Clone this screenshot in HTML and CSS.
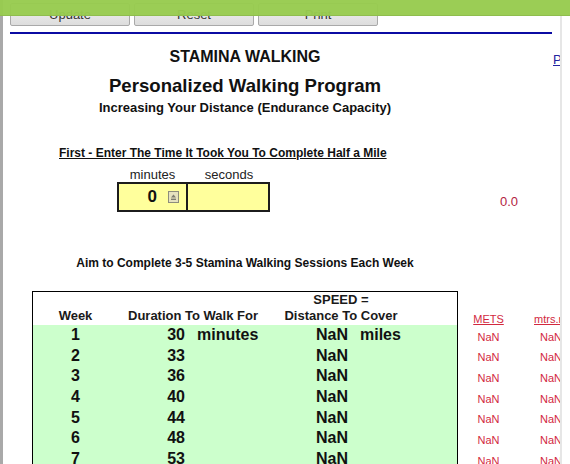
FILE: index.html
```html
<!DOCTYPE html>
<html lang="en">
<head>
    <meta charset="UTF-8">
    <title>Stamina Walking</title>
    <link rel="stylesheet" href="styles.css">
</head>
<body>
    <div class="frame">
        <div class="toolbar">
            <button class="btn">Update</button>
            <button class="btn">Reset</button>
            <button class="btn">Print</button>
        </div>
        <div class="rule"></div>

        <div class="head">
            <div class="titles">
                <h1 class="kicker">STAMINA WALKING</h1>
                <h2 class="title">Personalized Walking Program</h2>
                <p class="subtitle">Increasing Your Distance (Endurance Capacity)</p>
            </div>
            <a class="side-link" href="#">P</a>
        </div>

        <div class="entry-row">
            <div class="entry">
                <p class="entry-prompt">First - Enter The Time It Took You To Complete Half a Mile</p>
                <div class="time-grid">
                    <span class="time-label">minutes</span>
                    <span class="time-label">seconds</span>
                    <div class="time-box minutes">
                        <span class="time-value">0</span>
                        <svg class="spin-icon" width="11" height="12" viewBox="0 0 11 12">
                            <rect x="0.5" y="0.5" width="10" height="11" fill="#e6e2bf" stroke="#8d8d7c"/>
                            <path d="M3 6.5 L5.5 3.5 L8 6.5 Z" fill="#7d7d70"/>
                            <rect x="3" y="7.6" width="5" height="1.4" fill="#7d7d70"/>
                        </svg>
                    </div>
                    <div class="time-box seconds"></div>
                </div>
            </div>
            <span class="pace">0.0</span>
        </div>

        <p class="aim">Aim to Complete 3-5 Stamina Walking Sessions Each Week</p>

        <div class="plan">
            <div class="plan-table">
                <div class="plan-head">
                    <span class="h-speed">SPEED =</span>
                    <span class="h-week">Week</span>
                    <span class="h-duration">Duration To Walk For</span>
                    <span class="h-distance">Distance To Cover</span>
                </div>
                <div class="plan-body">
                    <div class="plan-row"><span class="c-week">1</span><span class="c-num">30</span><span class="c-unit">minutes</span><span class="c-num">NaN</span><span class="c-unit">miles</span></div>
                    <div class="plan-row"><span class="c-week">2</span><span class="c-num">33</span><span class="c-unit"></span><span class="c-num">NaN</span><span class="c-unit"></span></div>
                    <div class="plan-row"><span class="c-week">3</span><span class="c-num">36</span><span class="c-unit"></span><span class="c-num">NaN</span><span class="c-unit"></span></div>
                    <div class="plan-row"><span class="c-week">4</span><span class="c-num">40</span><span class="c-unit"></span><span class="c-num">NaN</span><span class="c-unit"></span></div>
                    <div class="plan-row"><span class="c-week">5</span><span class="c-num">44</span><span class="c-unit"></span><span class="c-num">NaN</span><span class="c-unit"></span></div>
                    <div class="plan-row"><span class="c-week">6</span><span class="c-num">48</span><span class="c-unit"></span><span class="c-num">NaN</span><span class="c-unit"></span></div>
                    <div class="plan-row"><span class="c-week">7</span><span class="c-num">53</span><span class="c-unit"></span><span class="c-num">NaN</span><span class="c-unit"></span></div>
                </div>
            </div>

            <div class="extra">
                <a class="x-head" href="#">METS</a>
                <a class="x-head x-second" href="#">mtrs.min</a>
                <span class="x-val">NaN</span><span class="x-val x-second">NaN</span>
                <span class="x-val">NaN</span><span class="x-val x-second">NaN</span>
                <span class="x-val">NaN</span><span class="x-val x-second">NaN</span>
                <span class="x-val">NaN</span><span class="x-val x-second">NaN</span>
                <span class="x-val">NaN</span><span class="x-val x-second">NaN</span>
                <span class="x-val">NaN</span><span class="x-val x-second">NaN</span>
                <span class="x-val">NaN</span><span class="x-val x-second">NaN</span>
            </div>
        </div>
    </div>

    <div class="topbar"></div>
</body>
</html>
```

FILE: styles.css
```css
body {
    margin: 0;
    font-family: 'Liberation Sans', Arial, sans-serif;
    color: #111;
    background: #fff;
}

.frame {
    width: 557px;
    height: 464px;
    border-left: 3px solid #a9a9a9;
    border-right: 2px solid #e6e6e6;
    overflow: hidden;
}

.topbar {
    position: absolute;
    top: 0;
    left: 0;
    width: 570px;
    height: 15px;
    background: rgba(152, 203, 80, 0.97);
    border-bottom: 1px solid #8fbd4e;
}

.toolbar {
    display: flex;
    gap: 4px;
    padding: 3px 0 0 7px;
}

.btn {
    width: 120px;
    height: 23px;
    padding: 0;
    font-family: 'Liberation Sans', Arial, sans-serif;
    font-size: 13px;
    color: #333;
    background: linear-gradient(#f2f2f2, #dddddd);
    border: 1px solid #a9a9a9;
    border-radius: 2px;
}

.rule {
    margin: 6px 0 0 7px;
    width: 542px;
    height: 2px;
    background: #0b0ba3;
}

.head {
    display: flex;
}

.titles {
    flex: none;
    width: 470px;
    margin-left: 7px;
    padding-top: 13px;
    text-align: center;
}

.kicker {
    margin: 0;
    font-size: 16px;
    line-height: 20px;
}

.title {
    margin: 7px 0 0;
    font-size: 18.6px;
    line-height: 24px;
}

.subtitle {
    margin: 2px 0 0;
    font-size: 13px;
    font-weight: bold;
    line-height: 16px;
}

.side-link {
    margin: 18px 0 0 73px;
    font-size: 13px;
    line-height: 16px;
    color: #2323a0;
    height: 16px;
}

.entry-row {
    display: flex;
    margin-top: 30px;
}

.entry {
    flex: none;
    width: 470px;
    margin-left: 7px;
}

.entry-prompt {
    margin: 0 0 0 49px;
    font-size: 12px;
    font-weight: bold;
    line-height: 15px;
    text-decoration: underline;
}

.time-grid {
    display: grid;
    grid-template-columns: 71px 82px;
    margin: 6px 0 0 107px;
}

.time-label {
    font-size: 13px;
    line-height: 15px;
    text-align: center;
    color: #222;
}

.time-box {
    box-sizing: border-box;
    height: 30px;
    border: 2px solid #1c1c1c;
    background: #ffff9c;
}

.time-box.minutes {
    display: flex;
    align-items: center;
    justify-content: flex-end;
    gap: 11px;
    padding-right: 7px;
}

.time-box.seconds {
    border-left: 0;
}

.time-value {
    font-size: 17px;
    font-weight: bold;
}

.spin-icon {
    display: block;
}

.pace {
    margin: 48px 0 0 20px;
    font-size: 13px;
    line-height: 16px;
    color: #b3243f;
    height: 16px;
}

.aim {
    width: 470px;
    margin: 44px 0 0 7px;
    font-size: 12px;
    font-weight: bold;
    line-height: 15px;
    text-align: center;
}

.plan {
    display: flex;
    margin-top: 20px;
}

.plan-table {
    flex: none;
    box-sizing: border-box;
    width: 426px;
    margin-left: 29px;
    border: 1px solid #000;
    border-bottom: 0;
}

.plan-head {
    display: grid;
    grid-template-columns: 85px 150px 146px;
    grid-template-rows: 16px 17px;
    font-size: 13px;
    font-weight: bold;
    line-height: 16px;
    text-align: center;
    color: #1a1a1a;
}

.h-speed {
    grid-column: 3;
    grid-row: 1;
}

.h-week { grid-column: 1; grid-row: 2; }
.h-duration { grid-column: 2; grid-row: 2; }
.h-distance { grid-column: 3; grid-row: 2; }

.plan-body {
    background: #ccffcc;
    height: 180px;
}

.plan-row {
    display: grid;
    grid-template-columns: 85px 67px 85px 78px 1fr;
    height: 20.67px;
    font-size: 16px;
    font-weight: bold;
    line-height: 20.67px;
}

.c-week {
    text-align: center;
}

.c-num {
    text-align: right;
}

.c-unit {
    padding-left: 12px;
}

.extra {
    flex: none;
    display: grid;
    grid-template-columns: 31px 60px;
    grid-auto-rows: 20.67px;
    column-gap: 30px;
    align-content: start;
    margin-left: 15px;
    padding-top: 18px;
    font-size: 11px;
    color: #d2283e;
}

.x-head {
    color: #d2283e;
    line-height: 14px;
    text-align: center;
    padding-top: 3px;
    white-space: nowrap;
}

.x-val {
    line-height: 14px;
    text-align: center;
}

.x-second {
    text-align: left;
}

.x-val.x-second {
    padding-left: 6px;
}
```
